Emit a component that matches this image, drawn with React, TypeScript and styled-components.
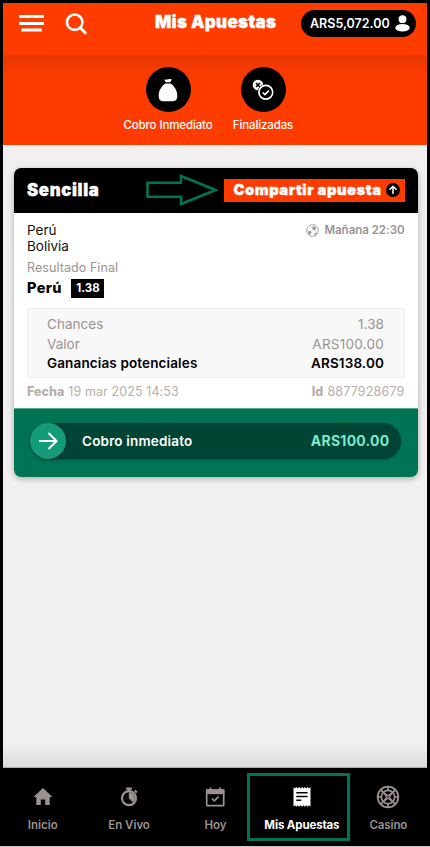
import React from 'react';
import styled, { createGlobalStyle } from 'styled-components';

const Global = createGlobalStyle`
  * { box-sizing: border-box; }
  body { margin: 0; background: #000; font-family: Inter, "Liberation Sans", sans-serif; }
`;

const Screen = styled.div`
  width: 430px; height: 847px; padding-top: 3px; overflow: hidden;
  display: flex; flex-direction: column; background: #000;
  border-bottom: 1px solid #c9c9c9;
`;
const Text = styled.span<{ $size: number; $weight?: number; $color?: string; $ls?: number; $lh?: number }>`
  display: block; white-space: nowrap;
  font-size: ${p => p.$size}px; font-weight: ${p => p.$weight ?? 400};
  color: ${p => p.$color ?? '#fff'}; letter-spacing: ${p => p.$ls ?? 0}px;
  line-height: ${p => p.$lh ?? 20}px;
`;
const Heading = styled(Text)`-webkit-text-stroke: 0.35px currentColor;`;
const Market = styled(Text)`margin: 3px 0 1px;`;

const TopBar = styled.header`
  height: 52px; margin: 0 3px; background: #ff3c00; flex: none;
  display: flex; align-items: flex-start; padding: 7px 11px 0 16px;
`;
const MenuIcon = styled.svg`width: 25px; height: 17px; margin-top: 5px;`;
const SearchIcon = styled.svg`width: 22px; height: 22px; margin: 3px 0 0 21px;`;
const TitleSlot = styled.div`margin: 2px 0 0 68px; width: 146px;`;
const Balance = styled.div`
  width: 115px; height: 27px; border-radius: 14px; background: #000; flex: none;
  display: flex; align-items: center; justify-content: space-between; padding: 0 6px 0 9px;
`;
const Tabs = styled.nav`
  height: 90px; margin: 0 3px; flex: none; display: flex; justify-content: center; gap: 0;
  padding: 12px 0 0 1px;
  background: linear-gradient(#e63703, #f53a01 13px, #ff3c00 28px);
`;
const Tab = styled.div`width: 95px; display: flex; flex-direction: column; align-items: center;`;
const Disc = styled.div`
  width: 45px; height: 45px; border-radius: 50%; background: #000; margin-bottom: 4px;
  display: flex; align-items: center; justify-content: center;
`;
const Content = styled.main`
  flex: 1; margin: 0 3px; padding: 23px 9px 0 10.5px;
  background: linear-gradient(#f1eff0 calc(100% - 23px), #dcdadb 100%);
  border-bottom: 1px solid #aaa;
`;
const Card = styled.article`
  height: 309px; border-radius: 7px; overflow: hidden; background: #fff;
  display: flex; flex-direction: column;
  box-shadow: 0 2px 6px rgba(0,0,0,.28);
`;
const CardHead = styled.div`
  height: 44.5px; background: #000; display: flex; align-items: center; flex: none;
  padding: 0 13.5px;
`;
const CardName = styled.div`width: 119px;`;
const Arrow = styled.svg`width: 72px; height: 32px; display: block; flex: none; margin: -1px 0 0 0;`;
const Share = styled.button`
  width: 181px; height: 22.5px; background: #ff3c00; border: 0; padding: 0 5px 0 10px;
  display: flex; align-items: center; justify-content: space-between; margin-left: auto; font-family: inherit;
`;
const CardBody = styled.div`flex: 1; padding: 9.5px 13.5px 0;`;
const Row = styled.div<{ $gap?: number; $between?: boolean }>`
  display: flex; align-items: center; gap: ${p => p.$gap ?? 0}px;
  justify-content: ${p => (p.$between ? 'space-between' : 'flex-start')};
`;
const Odds = styled.div`
  width: 33px; height: 18.5px; background: #000; display: flex; justify-content: center; align-items: center;
`;
const Summary = styled.div`
  margin: 10.5px 0 1px; height: 70px; border: 1px solid #eee; background: #f8f8f8; padding: 6px 19.5px 0 19px;
`;
const CashOut = styled.div`
  height: 69px; background: #007355; border-top: 1px solid #5da892; padding: 14px 17px 0 16.5px; flex: none;
`;
const Slider = styled.div`
  height: 36px; border-radius: 18px; background: #004434; display: flex; align-items: center;
  padding-right: 11.5px; box-shadow: 0 1px 2px rgba(0,0,0,.25);
`;
const Knob = styled.div`
  width: 36px; height: 36px; border-radius: 50%; background: #149b7a; margin-right: 16px;
  display: flex; align-items: center; justify-content: center; box-shadow: 0 1px 3px rgba(0,0,0,.35);
`;
const Push = styled.div`margin-left: auto;`;
const BottomNav = styled.nav`
  height: 78px; flex: none; display: grid; grid-template-columns: repeat(5, 1fr); margin: 0 -1.5px 0 -0.5px;
`;
const NavItem = styled.div`
  position: relative; display: flex; flex-direction: column; align-items: center; padding-top: 17px;
  svg { width: 24px; height: 24px; display: block; margin-bottom: 6px; }
`;
const Highlight = styled.div`
  position: absolute; top: 5px; left: -11.7px; width: 103px; height: 68px; border: 3px solid #007355;
`;

const GREY = '#9b9290';
const PALE = '#b9aeab';

const Bag = () => (
  <svg width="20" height="24" viewBox="0 0 20 24" fill="#fff">
    <path d="M6.200 1.300q1.900 .8 3.800 0t3.800 0L12.300 4.300H7.700z" />
    <path d="M7.400 5.400h5.200C16.500 7.800 19.300 12.800 19.300 17.500c0 4.200-1.500 5.800-5.300 5.800H6C2.200 23.300.700 21.700 .700 17.500c0-4.700 2.800-9.700 6.700-12.100z" />
  </svg>
);
const Settled = () => (
  <svg width="22" height="22" viewBox="0 0 22 22" fill="none">
    <circle cx="6" cy="6" r="5.300" fill="#fff" />
    <path d="m4 4 4 4m0-4-4 4" stroke="#000" strokeWidth="1.600" />
    <circle cx="13.800" cy="13.300" r="8.300" fill="#000" />
    <circle cx="13.800" cy="13.300" r="6.900" stroke="#fff" strokeWidth="1.700" />
    <path d="m10.700 13.500 2.200 2.100 4-4" stroke="#fff" strokeWidth="1.700" />
  </svg>
);
const Ball = () => (
  <svg width="13" height="13" viewBox="0 0 13 13" fill="none" stroke={GREY}>
    <circle cx="6.500" cy="6.500" r="5.900" strokeWidth=".8" />
    <path d="m6.200 3.500 2-1 1.700 1.300-.7 2-2.100.2zM2.500 7.300l2-.2.900 1.700-1.300 1.600-1.600-.5z" fill={GREY} strokeWidth=".3" />
    <path d="m8.200 2.500-.3-1.700M9.900 3.800l2 .7M6.900 6 5 7.100M9.200 5.800l1.200 3-2.200 2.300M6.200 3.500l-3-.7M2.500 7.300.8 6.600" strokeWidth=".4" />
    <path d="M10.400 8.800 9 9l-.9 2.200 1.700-.5z" fill={GREY} strokeWidth=".2" />
  </svg>
);
const House = () => (
  <svg viewBox="0 0 24 24" fill={GREY}><path d="M12 3 2.500 12h2.800v8h4.500v-5.500h4.400V20h4.500v-8h2.800z" /></svg>
);
const Stopwatch = () => (
  <svg viewBox="0 0 24 24" fill="none" stroke={GREY}>
    <circle cx="12" cy="13.200" r="7" strokeWidth="2.200" />
    <path d="M12 7.500v5.700l4 4.100a5.700 5.700 0 0 0-4-9.800z" fill={GREY} strokeWidth=".4" />
    <path d="M9 3.500h6" strokeWidth="2" /><path d="M12 4v3" strokeWidth="3" /><path d="m17.800 5.500 2 2" strokeWidth="2.200" />
  </svg>
);
const Calendar = () => (
  <svg viewBox="0 0 24 24" fill="none" stroke={GREY}>
    <rect x="3.700" y="5" width="17" height="15.700" rx="1" strokeWidth="1.700" />
    <path d="M3 6.700h18.400" strokeWidth="5" /><path d="M7.500 2.500v3m9.400-3v3" strokeWidth="1.800" />
    <path d="m8.900 13.500 2.400 2.300 4.300-4.200" strokeWidth="1.700" />
  </svg>
);
const Receipt = () => (
  <svg viewBox="0 0 24 24">
    <path d="m3.500 2 1.400 1.500L6.400 2l1.400 1.500L9.200 2l1.400 1.500L12 2l1.400 1.500L14.800 2l1.400 1.500L17.600 2 19 3.500 20.500 2v19.700L19 20.200l-1.400 1.500-1.400-1.500-1.400 1.500-1.400-1.500-1.400 1.500-1.400-1.500-1.400 1.500-1.400-1.500-1.400 1.500-1.500-1.500-1.400 1.500z" fill="#fff" />
    <path d="M6.300 7.700h11.300M6.300 11.400h11.300M6.300 15.200h5" stroke="#000" strokeWidth="1.500" />
  </svg>
);
const Chip = () => (
  <svg viewBox="0 0 24 24" fill="none" stroke={GREY}>
    <circle cx="12" cy="12" r="10.300" strokeWidth="1.800" />
    <path d="M12 1.500V5m0 14v3.500M1.500 12H5m14 0h3.500M4.600 4.600l2.500 2.500m9.800 9.800 2.500 2.500m0-14.800-2.500 2.500m-9.800 9.800-2.500 2.500" strokeWidth="1.700" />
    <circle cx="12" cy="12" r="6.700" strokeWidth="1.700" />
    <path d="m7.800 7.800 2.900 2.900m5.500-2.900-2.900 2.900m2.900 5.500-2.900-2.900m-5.500 2.900 2.900-2.900" strokeWidth="2.300" />
    <path d="m12 10 2 2-2 2-2-2z" strokeWidth="1.200" />
  </svg>
);

const NAV = [
  { label: 'Inicio', icon: <House />, ls: 0 },
  { label: 'En Vivo', icon: <Stopwatch />, ls: -0.05 },
  { label: 'Hoy', icon: <Calendar />, ls: -0.1 },
  { label: 'Mis Apuestas', icon: <Receipt />, ls: -0.13, active: true },
  { label: 'Casino', icon: <Chip />, ls: -0.1 },
];
const SUMMARY = [
  { label: 'Chances', value: '1.38', ls: 0.05 },
  { label: 'Valor', value: 'ARS100.00', ls: 0.25 },
  { label: 'Ganancias potenciales', value: 'ARS138.00', ls: 0.13, strong: true },
];

export default function App() {
  return (
    <Screen>
      <Global />
      <TopBar>
        <MenuIcon viewBox="0 0 25 17" fill="#fff"><path d="M0 0h25v3H0zM0 7h25v3H0zM2.300 13.600h20.500v3H2.300z" /></MenuIcon>
        <SearchIcon viewBox="0 0 22 22" fill="none" stroke="#fff">
          <circle cx="9.700" cy="9.200" r="7.700" strokeWidth="2.600" /><path d="m15.200 14.800 5 5" strokeWidth="3" strokeLinecap="round" />
        </SearchIcon>
        <TitleSlot><Heading $size={17} $weight={900} $ls={0.32} $lh={20}>Mis Apuestas</Heading></TitleSlot>
        <Balance>
          <Text $size={12.5} $weight={600}>ARS5,072.00</Text>
          <svg width="15" height="17" viewBox="0 0 15 17" fill="#fff"><circle cx="7.500" cy="4.200" r="3.900" /><ellipse cx="7.500" cy="12.800" rx="7.200" ry="3.800" /></svg>
        </Balance>
      </TopBar>
      <Tabs>
        <Tab><Disc><Bag /></Disc><Text $size={11.5} $weight={500} $ls={-0.12} $lh={18}>Cobro Inmediato</Text></Tab>
        <Tab><Disc><Settled /></Disc><Text $size={11.5} $weight={500} $ls={-0.12} $lh={18}>Finalizadas</Text></Tab>
      </Tabs>
      <Content>
        <Card>
          <CardHead>
            <CardName><Heading $size={16.8} $weight={900} $ls={0.65}>Sencilla</Heading></CardName>
            <Arrow viewBox="0 0 72 32" fill="none" stroke="#007355" strokeWidth="2.600"><path d="M1.500 8.800H35V2l34.500 14L35 30v-7.200H1.500z" /></Arrow>
            <Share>
              <Heading $size={14.7} $weight={900} $ls={0.55}>Compartir apuesta</Heading>
              <svg width="14" height="14" viewBox="0 0 14 14"><circle cx="7" cy="7" r="7" /><path d="M7 11V3.500M3.500 6.700 7 3.200l3.500 3.500" fill="none" stroke="#fff" strokeWidth="1.500" /></svg>
            </Share>
          </CardHead>
          <CardBody>
            <Row $between>
              <Text $size={13.5} $color="#111" $lh={16}>Perú</Text>
              <Row $gap={5}><Ball /><Text $size={11.5} $weight={600} $color={GREY} $ls={-0.02} $lh={16}>Mañana 22:30</Text></Row>
            </Row>
            <Text $size={13.5} $color="#111" $lh={16}>Bolivia</Text>
            <Market $size={12.5} $color={GREY} $ls={0.07} $lh={21}>Resultado Final</Market>
            <Row $gap={9.5}>
              <Text $size={14.5} $weight={800} $color="#000" $ls={0.4} $lh={16}>Perú</Text>
              <Odds><Text $size={11.5} $weight={700} $lh={16}>1.38</Text></Odds>
            </Row>
            <Summary>
              {SUMMARY.map(s => (
                <Row key={s.label} $between>
                  <Text $size={13.5} $weight={s.strong ? 600 : 400} $color={s.strong ? '#000' : GREY} $ls={s.strong ? s.ls : 0.03} $lh={19.5}>{s.label}</Text>
                  <Text $size={13.5} $weight={s.strong ? 600 : 400} $color={s.strong ? '#000' : GREY} $ls={s.ls} $lh={19.5}>{s.value}</Text>
                </Row>
              ))}
            </Summary>
            <Row $between>
              <Row $gap={4}><Text $size={12.5} $weight={800} $color={PALE} $lh={26}>Fecha</Text><Text $size={12.5} $color={PALE} $ls={0.1} $lh={26}>19 mar 2025 14:53</Text></Row>
              <Row $gap={4}><Text $size={12.5} $weight={800} $color={PALE} $ls={0.1} $lh={26}>Id</Text><Text $size={12.5} $color={PALE} $ls={0.18} $lh={26}>8877928679</Text></Row>
            </Row>
          </CardBody>
          <CashOut>
            <Slider>
              <Knob><svg width="20" height="20" viewBox="0 0 20 20" fill="none" stroke="#fff" strokeWidth="2"><path d="M1 10h17M10.500 2l8 8-8 8" /></svg></Knob>
              <Text $size={13.5} $weight={600} $ls={0.18}>Cobro inmediato</Text>
              <Push><Text $size={14} $weight={700} $ls={0.25} $color="#7ee8cc">ARS100.00</Text></Push>
            </Slider>
          </CashOut>
        </Card>
      </Content>
      <BottomNav>
        {NAV.map(n => (
          <NavItem key={n.label}>
            {n.icon}
            <Text $size={11.5} $weight={n.active ? 700 : 600} $color={n.active ? '#fff' : GREY} $ls={n.ls} $lh={20}>{n.label}</Text>
            {n.active && <Highlight />}
          </NavItem>
        ))}
      </BottomNav>
    </Screen>
  );
}
